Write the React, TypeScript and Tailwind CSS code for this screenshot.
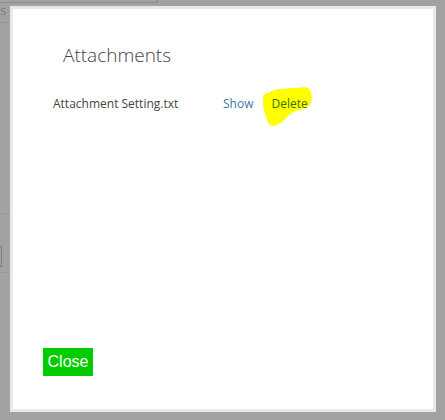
export default function App() {
  return (
    <div className="relative w-[445px] h-[420px] overflow-hidden bg-[#a2a2a2] font-['Open_Sans',sans-serif]">
      {/* faint page behind the overlay */}
      <div className="absolute left-0 top-0 w-[158px] h-[3px] border-b border-r border-[#8f8f8f]" />
      <span className="absolute left-0 top-[4px] text-[13px] text-[#7c7c7c] leading-none">s</span>
      <div className="absolute left-0 top-[22px] w-[10px] h-px bg-[#969696]" />
      <div className="absolute left-0 top-[213px] w-[10px] h-px bg-[#999999]" />
      <div className="absolute left-[-4px] top-[246px] w-[6px] h-[21px] border border-[#7d7d7d]" />
      <div className="absolute left-0 top-[272px] w-[10px] h-px bg-[#999999]" />

      <div className="absolute left-[10px] top-[6px] w-[426px] h-[406px] border-[3px] border-[#e6e9f1] bg-white">
        <div className="flex flex-col h-full pl-[50px] pt-[32px]">
          <h1 className="text-[19px] font-light text-[#444444] leading-[28px]">
            Attachments
          </h1>
          <div className="flex items-center mt-[26px] ml-[-10px] text-[12px] leading-[18px]">
            <span className="text-[#444444] w-[170px]">Attachment Setting.txt</span>
            <span className="text-[#3d78a8]">Show</span>
            <span className="relative ml-[18px]">
              <svg
                className="absolute left-[-10px] top-[-10px]"
                width="52"
                height="42"
                viewBox="0 0 52 42"
              >
                <path
                  d="M8 8 C14 2 30 4 44 2 C50 3 52 10 50 18 C48 24 38 24 30 28 C26 32 20 40 12 41 C6 40 6 34 4 28 C2 22 1 14 3 10 C4 8 6 8 8 8 Z"
                  fill="#ffff00"
                />
              </svg>
              <span className="relative text-[#3b7000]">Delete</span>
            </span>
          </div>
          <div className="flex-1" />
          <div className="mb-[33px] ml-[-20px]">
            <button className="bg-[#00cc00] text-white h-[28px] w-[50px] text-[16px] font-['Liberation_Sans',sans-serif] leading-none">
              Close
            </button>
          </div>
        </div>
      </div>
    </div>
  );
}
